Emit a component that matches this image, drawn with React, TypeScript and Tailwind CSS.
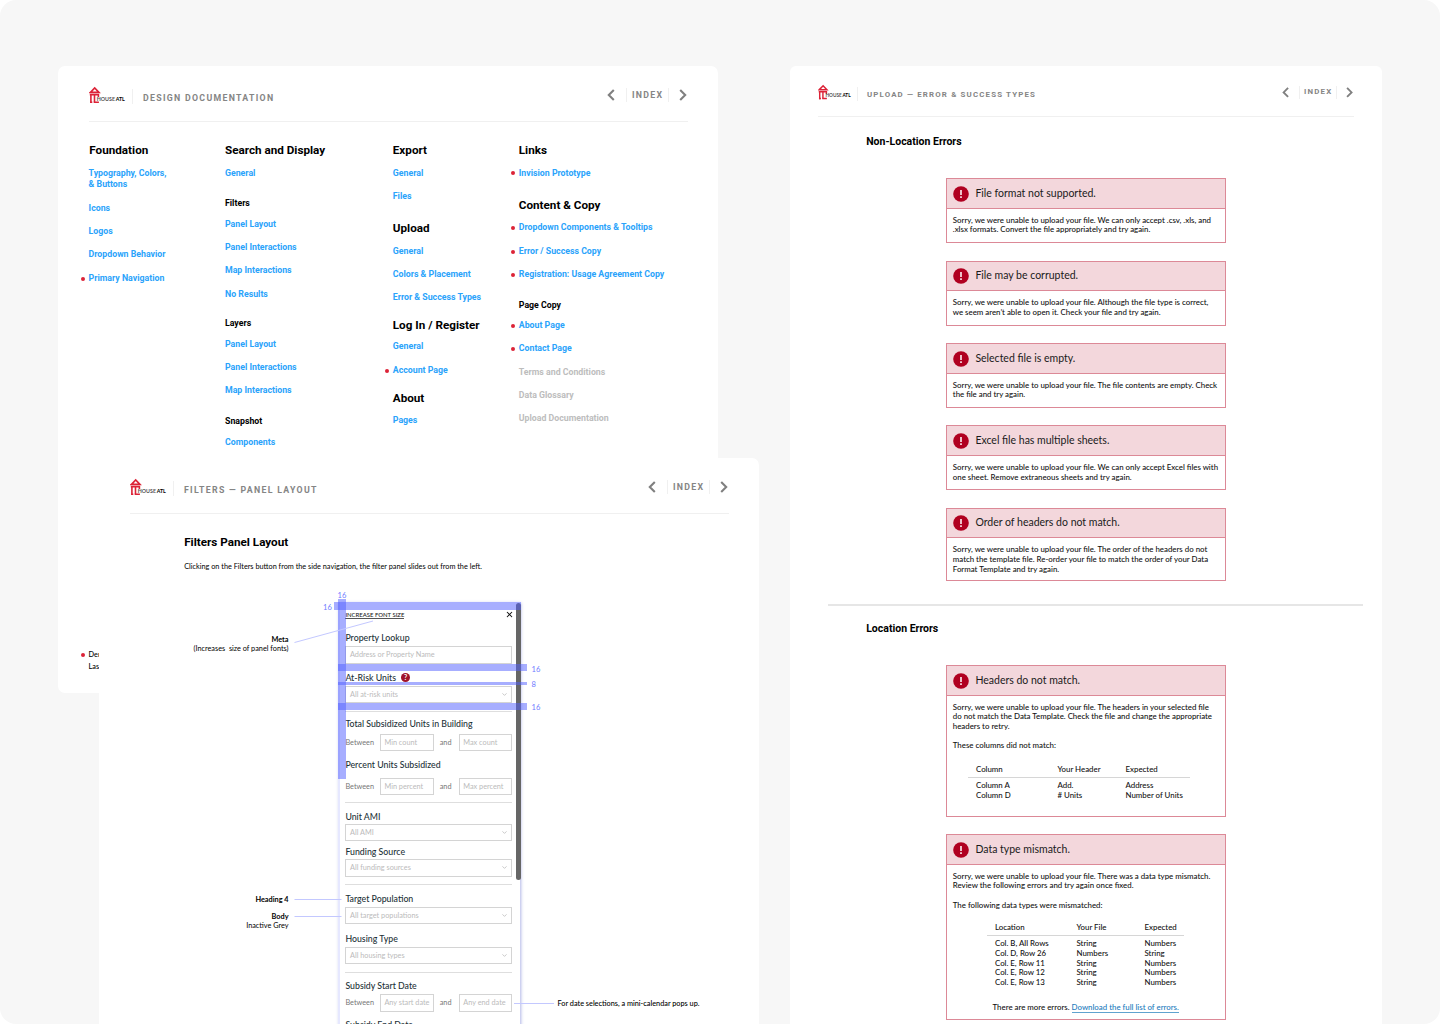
import React from 'react'
import clsx from 'clsx'
import { ChevronDown, X } from 'lucide-react'

type LinkItem = { label: React.ReactNode; dot?: boolean; muted?: boolean }
type Group = { title: string; sub?: boolean; className?: string; titleGap?: string; items: LinkItem[] }

const columns: { className: string; groups: Group[] }[] = [
  {
    className: 'w-[136.4px] [&_h2]:pl-[0.7px]',
    groups: [
      {
        title: 'Foundation',
        items: [
          { label: <>Typography, Colors,<br />&amp; Buttons</> },
          { label: 'Icons' },
          { label: 'Logos' },
          { label: 'Dropdown Behavior' },
          { label: 'Primary Navigation', dot: true },
        ],
      },
    ],
  },
  {
    className: 'w-[167.8px]',
    groups: [
      { title: 'Search and Display', items: [{ label: 'General' }] },
      {
        title: 'Filters',
        sub: true,
        className: 'mt-[17.55px]',
        items: [{ label: 'Panel Layout' }, { label: 'Panel Interactions' }, { label: 'Map Interactions' }, { label: 'No Results' }],
      },
      {
        title: 'Layers',
        sub: true,
        className: 'mt-[16.85px]',
        titleGap: 'mb-[9.45px]',
        items: [{ label: 'Panel Layout' }, { label: 'Panel Interactions' }, { label: 'Map Interactions' }],
      },
      { title: 'Snapshot', sub: true, className: 'mt-[17.75px]', items: [{ label: 'Components' }] },
    ],
  },
  {
    className: 'w-[126px]',
    groups: [
      { title: 'Export', items: [{ label: 'General' }, { label: 'Files' }] },
      {
        title: 'Upload',
        className: 'mt-[15.4px]',
        titleGap: 'mb-[7.5px]',
        items: [{ label: 'General' }, { label: 'Colors & Placement' }, { label: 'Error & Success Types' }],
      },
      {
        title: 'Log In / Register',
        className: 'mt-[11.25px]',
        titleGap: 'mb-[6.2px]',
        items: [{ label: 'General' }, { label: 'Account Page', dot: true }],
      },
      { title: 'About', className: 'mt-[11.1px]', items: [{ label: 'Pages' }] },
    ],
  },
  {
    className: 'w-[170px]',
    groups: [
      { title: 'Links', items: [{ label: 'Invision Prototype', dot: true }] },
      {
        title: 'Content & Copy',
        className: 'mt-[15.3px]',
        items: [
          { label: 'Dropdown Components & Tooltips', dot: true },
          { label: 'Error / Success Copy', dot: true },
          { label: 'Registration: Usage Agreement Copy', dot: true },
        ],
      },
      {
        title: 'Page Copy',
        sub: true,
        className: 'mt-[17.85px]',
        titleGap: 'mb-[9.25px]',
        items: [
          { label: 'About Page', dot: true },
          { label: 'Contact Page', dot: true },
          { label: 'Terms and Conditions', muted: true },
          { label: 'Data Glossary', muted: true },
          { label: 'Upload Documentation', muted: true },
        ],
      },
    ],
  },
]

const uploadErrors = [
  {
    title: 'File format not supported.',
    height: 'h-[65px]',
    lines: ['Sorry, we were unable to upload your file. We can only accept .csv, .xls, and', '.xlsx formats. Convert the file appropriately and try again.'],
  },
  {
    title: 'File may be corrupted.',
    height: 'h-[65px]',
    lines: ['Sorry, we were unable to upload your file. Although the file type is correct,', 'we seem aren’t able to open it. Check your file and try again.'],
  },
  {
    title: 'Selected file is empty.',
    height: 'h-[65px]',
    lines: ['Sorry, we were unable to upload your file. The file contents are empty. Check', 'the file and try again.'],
  },
  {
    title: 'Excel file has multiple sheets.',
    height: 'h-[65px]',
    lines: ['Sorry, we were unable to upload your file. We can only accept Excel files with', 'one sheet. Remove extraneous sheets and try again.'],
  },
  {
    title: 'Order of headers do not match.',
    height: 'h-[73px]',
    lines: [
      'Sorry, we were unable to upload your file. The order of the headers do not',
      'match the template file. Re-order your file to match the order of your Data',
      'Format Template and try again.',
    ],
  },
]

function Logo() {
  return (
    <div className="flex h-[18px] w-[36px] items-end">
      <svg width="12" height="18" viewBox="0 0 12 18" className="shrink-0" fill="none" stroke="#dc2337">
        <path d="M1.5 6.3 5.7 2l4.2 4.3z" strokeWidth="1.7" />
        <path d="M.8 8.6h9.4M1.9 8v8.9M5.5 8.6v7.6M9.4 8v3.2" strokeWidth="1.6" />
        <path d="M1.1 16.2h2.2M4.7 16.2h5.2" strokeWidth="1.6" />
      </svg>
      <span className="-ml-[3.8px] mb-[2px] whitespace-nowrap font-['Lato'] text-[5.3px] leading-[6px] text-[#555]">
        HOUSE<span className="ml-[0.7px] font-bold text-black">ATL</span>
      </span>
    </div>
  )
}

function Chevron({ left }: { left?: boolean }) {
  return (
    <svg width="8" height="12" viewBox="0 0 8 12" fill="none" stroke="#808080" strokeWidth="2.1">
      <path d={left ? 'M6.8 1 1.8 6l5 5' : 'M1.2 1l5 5-5 5'} />
    </svg>
  )
}

function BoardHeader({ title }: { title: string }) {
  return (
    <header className="mx-[30.5px] flex h-[56px] items-start justify-between border-b border-[#f0f0f0] font-['Roboto'] text-[8.77px] font-bold text-[#858585]">
      <div className="flex">
        <div className="mt-[20px]"><Logo /></div>
        <div className="ml-[7px] mt-[23px] h-[15px] w-px bg-[#f0f0f0]" />
        <h1 className="ml-[10.5px] mt-[26px] leading-[12px] tracking-[1.3px]">{title}</h1>
      </div>
      <nav className="mr-[0.6px] mt-[22px] flex h-[14px] items-center">
        <Chevron left />
        <div className="ml-[10.5px] h-[14px] w-px bg-[#f0f0f0]" />
        <span className="w-[41px] pl-[5px] leading-[12px] tracking-[1.3px]">INDEX</span>
        <div className="mr-[10px] h-[14px] w-px bg-[#f0f0f0]" />
        <Chevron />
      </nav>
    </header>
  )
}

function Dot() {
  return <span className="absolute -left-[8px] top-1/2 size-[4px] -translate-y-1/2 rounded-full bg-[#dc2337]" />
}

function LinkGroup({ group }: { group: Group }) {
  return (
    <section className={group.className}>
      <h2
        className={clsx(
          'whitespace-nowrap font-bold text-black',
          group.sub ? 'h-[12px] text-[8.77px] leading-[12px]' : 'h-[20px] text-[11.7px] leading-[20px]',
          group.titleGap ?? (group.sub ? 'mb-[9.75px]' : 'mb-[7.75px]')
        )}
      >
        {group.title}
      </h2>
      <ul className="flex flex-col gap-[11.65px]">
        {group.items.map((item, i) => (
          <li key={i} className={clsx('relative whitespace-nowrap font-bold', item.muted ? 'text-[#bdbdbd]' : 'text-[#2aa3fb]')}>
            {item.dot && <Dot />}
            {item.label}
          </li>
        ))}
      </ul>
    </section>
  )
}

function IndexBoard() {
  return (
    <article className="absolute left-[58px] top-[66px] flex h-[627px] w-[660px] flex-col rounded-[7px] bg-white">
      <BoardHeader title="DESIGN DOCUMENTATION" />
      <div className="ml-[30.6px] mt-[17.9px] flex font-['Roboto'] text-[8.77px] leading-[11.7px]">
        {columns.map((col, i) => (
          <div key={i} className={col.className}>
            {col.groups.map((g) => <LinkGroup key={g.title} group={g} />)}
          </div>
        ))}
      </div>
      <footer className="mb-[20.5px] ml-[30.6px] mt-auto w-[20px] font-['Lato'] text-[7.3px] font-medium leading-[11.7px]">
        <p className="relative"><Dot />Denotes</p>
        <p>Last</p>
      </footer>
    </article>
  )
}

function FieldTitle({ className, children }: { className: string; children: React.ReactNode }) {
  return (
    <h3 className={clsx('flex h-[10px] items-center whitespace-nowrap pt-[1.2px] text-[8.77px] font-medium leading-[10px] text-[#1d3238]', className)}>
      {children}
    </h3>
  )
}

function Field({ placeholder, className, select = true }: { placeholder: string; className: string; select?: boolean }) {
  return (
    <div className={clsx('flex h-[17.5px] items-center justify-between whitespace-nowrap border border-[#d4d4d4] pl-[3.6px] pr-[3px] text-[#bbb]', className)}>
      <span className="pt-[2.2px]">{placeholder}</span>
      {select && <ChevronDown size={7} strokeWidth={2.5} color="#b5b5b5" />}
    </div>
  )
}

function Range({ from, to, className }: { from: string; to: string; className: string }) {
  return (
    <div className={clsx('flex items-center text-[#777]', className)}>
      <span className="w-[34.5px] pt-[1.8px]">Between</span>
      <Field placeholder={from} select={false} className="w-[54px]" />
      <span className="w-[25px] pl-[6px] pt-[2.2px]">and</span>
      <Field placeholder={to} select={false} className="w-[53px]" />
    </div>
  )
}

function Rule({ className }: { className: string }) {
  return <div className={clsx('h-px bg-[#dedede]', className)} />
}

function FilterPanel() {
  return (
    <div className="relative ml-[239px] mt-[30px] w-[182px] font-['Lato'] text-[7.3px]">
      <div className="h-[440px] border-l-2 border-[#e6e8ff] bg-white pl-[5.4px] pr-[8.4px] pt-[7.5px] shadow-[1px_1px_3px_rgba(80,90,200,0.45)]">
        <div className="flex h-[10px] items-center justify-between pt-px">
          <span className="border-b border-[#555] text-[5.95px] font-medium leading-[7px] text-[#222]">INCREASE FONT SIZE</span>
          <X size={9} strokeWidth={2.8} color="#111" className="-mr-[2px]" />
        </div>
        <FieldTitle className="mt-[13px]">Property Lookup</FieldTitle>
        <Field placeholder="Address or Property Name" select={false} className="mt-[4px]" />
        <FieldTitle className="mt-[8.5px]">
          At-Risk Units
          <span className="ml-[5px] flex size-[9px] items-center justify-center rounded-full bg-[#a0122a] pb-px text-[7px] font-bold leading-[8px] text-white">?</span>
        </FieldTitle>
        <Field placeholder="All at-risk units" className="mt-[3.5px]" />
        <Rule className="mt-[7.5px]" />
        <FieldTitle className="mt-[6.5px]">Total Subsidized Units in Building</FieldTitle>
        <Range from="Min count" to="Max count" className="mt-[5.5px]" />
        <FieldTitle className="mt-[8.5px]">Percent Units Subsidized</FieldTitle>
        <Range from="Min percent" to="Max percent" className="mt-[8px]" />
        <Rule className="mt-[7px]" />
        <FieldTitle className="mt-[8px]">Unit AMI</FieldTitle>
        <Field placeholder="All AMI" className="mt-[2.5px]" />
        <FieldTitle className="mt-[5.5px]">Funding Source</FieldTitle>
        <Field placeholder="All funding sources" className="mt-[2.5px]" />
        <Rule className="mt-[7px]" />
        <FieldTitle className="mt-[8.5px]">Target Population</FieldTitle>
        <Field placeholder="All target populations" className="mt-[3.5px]" />
        <FieldTitle className="mt-[9px]">Housing Type</FieldTitle>
        <Field placeholder="All housing types" className="mt-[3.5px]" />
        <Rule className="mt-[7.5px]" />
        <FieldTitle className="mt-[8px]">Subsidy Start Date</FieldTitle>
        <Range from="Any start date" to="Any end date" className="mt-[3.5px]" />
        <FieldTitle className="mt-[8px]">Subsidy End Date</FieldTitle>
      </div>
      <div className="absolute left-[178px] top-[1px] h-[277px] w-[4.5px] rounded-full bg-[#666]" />

      {/* spacing guides */}
      <div className="absolute left-0 -top-[3px] h-[180px] w-[7.5px] bg-[#4f5dff]/50" />
      <div className="absolute -left-[4px] top-0 h-[8px] w-[187px] bg-[#4f5dff]/50" />
      <div className="absolute left-0 top-[62px] h-[7.7px] w-[189px] bg-[#4f5dff]/50" />
      <div className="absolute left-0 top-[80px] h-[3px] w-[189px] bg-[#4f5dff]/50" />
      <div className="absolute left-0 top-[101px] h-[7.7px] w-[189px] bg-[#4f5dff]/50" />
      <div className="text-[7.6px] leading-[10px] text-[#6f7bff]">
        <span className="absolute -left-[0.5px] -top-[12px]">16</span>
        <span className="absolute -left-[15px] top-[0.5px]">16</span>
        <span className="absolute left-[193.5px] top-[62px]">16</span>
        <span className="absolute left-[193.5px] top-[77px]">8</span>
        <span className="absolute left-[193.5px] top-[100.7px]">16</span>
      </div>

      {/* callouts */}
      <svg width="400" height="440" viewBox="-150 0 400 440" className="pointer-events-none absolute -left-[150px] top-0" stroke="#c3c8ff" strokeWidth="1">
        <path d="M-43.5 40.5 35 19M-43.5 297.5H3.5M-43.5 314.5H3.5M176 401.5H216" />
      </svg>
      <div className="leading-[9px] text-black">
        <p className="absolute right-[231.5px] top-[33px] whitespace-pre text-right"><b>Meta</b><br />(Increases  size of panel fonts)</p>
        <p className="absolute right-[231.5px] top-[293px] whitespace-nowrap"><b>Heading 4</b></p>
        <p className="absolute right-[231.5px] top-[310px] whitespace-nowrap text-right"><b>Body</b><br />Inactive Grey</p>
        <p className="absolute left-[219.5px] top-[397px] whitespace-nowrap font-medium">For date selections, a mini-calendar pops up.</p>
      </div>
    </div>
  )
}

function FiltersBoard() {
  return (
    <article className="absolute left-[99px] top-[458px] h-[600px] w-[660px] rounded-[7px] bg-white">
      <BoardHeader title="FILTERS — PANEL LAYOUT" />
      <h2 className="ml-[85.2px] mt-[18px] font-['Roboto'] text-[11.7px] font-bold leading-[20px] text-black">Filters Panel Layout</h2>
      <p className="ml-[85.2px] mt-[9.5px] font-['Lato'] text-[7.3px] leading-[10px] text-black">
        Clicking on the Filters button from the side navigation, the filter panel slides out from the left.
      </p>
      <FilterPanel />
    </article>
  )
}

function ErrorCard({ title, className, children }: { title: string; className: string; children: React.ReactNode }) {
  return (
    <section className={clsx('w-[280px] border border-[#dc8997] bg-white', className)}>
      <h3 className="flex h-[29.5px] items-center border-b border-[#dc8997] bg-[#f3d7dc] pl-[6px] pt-[0.6px] text-[10.5px] text-[#1a1a1a]">
        <svg width="16" height="16" viewBox="0 0 16 16" className="mr-[6.8px]">
          <circle cx="8" cy="8" r="7.8" fill="#b00020" />
          <path d="M7.1 4h1.8v4.9H7.1zM7.1 10.2h1.8v1.8H7.1z" fill="#f3d7dc" />
        </svg>
        {title}
      </h3>
      <div className="whitespace-nowrap pl-[6.2px] pt-[7px] text-[7.87px] font-medium leading-[9.65px] text-[#111]">{children}</div>
    </section>
  )
}

function ErrorTable({ head, rows, className }: { head: string[]; rows: string[][]; className: string }) {
  return (
    <table className={clsx('table-fixed text-left', className)}>
      <colgroup>
        <col className="w-[89.5px]" />
        <col className="w-[68px]" />
        <col />
      </colgroup>
      <thead>
        <tr className="h-[12.5px] border-b border-[#d6d6d6] align-top">
          {head.map((h) => <th key={h} className="p-0 font-medium first:pl-[8px]">{h}</th>)}
        </tr>
      </thead>
      <tbody>
        <tr className="h-[4px]" />
        {rows.map((row) => (
          <tr key={row[0]}>
            {row.map((cell, i) => <td key={i} className="p-0 first:pl-[8px]">{cell}</td>)}
          </tr>
        ))}
      </tbody>
    </table>
  )
}

function ErrorsBoard() {
  return (
    <article className="absolute left-[790px] top-[66px] h-[980px] w-[592px] rounded-[6px] bg-white font-['Lato']">
      <div className="px-[0.8px] pt-[0.6px] [zoom:0.897]">
        <BoardHeader title="UPLOAD — ERROR & SUCCESS TYPES" />
      </div>
      <h2 className="ml-[76.2px] mt-[15.3px] font-['Roboto'] text-[10.5px] font-bold leading-[20px] text-black">Non-Location Errors</h2>
      <div className="ml-[155.6px] mt-[26.2px] flex flex-col gap-[17.4px]">
        {uploadErrors.map((err) => (
          <ErrorCard key={err.title} title={err.title} className={err.height}>
            {err.lines.map((line) => <p key={line}>{line}</p>)}
          </ErrorCard>
        ))}
      </div>
      <div className="ml-[38px] mt-[23.4px] h-[1.5px] w-[535px] bg-[#e6e6e6]" />
      <h2 className="ml-[76.2px] mt-[13px] font-['Roboto'] text-[10.5px] font-bold leading-[20px] text-black">Location Errors</h2>
      <div className="ml-[155.6px] mt-[26.6px] flex flex-col gap-[17.5px]">
        <ErrorCard title="Headers do not match." className="h-[151.5px]">
          <p>Sorry, we were unable to upload your file. The headers in your selected file</p>
          <p>do not match the Data Template. Check the file and change the appropriate</p>
          <p>headers to retry.</p>
          <p className="mt-[9.65px]">These columns did not match:</p>
          <ErrorTable
            className="ml-[15.2px] mt-[13.7px] w-[222px]"
            head={['Column', 'Your Header', 'Expected']}
            rows={[['Column A', 'Add.', 'Address'], ['Column D', '# Units', 'Number of Units']]}
          />
        </ErrorCard>
        <ErrorCard title="Data type mismatch." className="h-[185.5px]">
          <p>Sorry, we were unable to upload your file. There was a data type mismatch.</p>
          <p>Review the following errors and try again once fixed.</p>
          <p className="mt-[9.65px]">The following data types were mismatched:</p>
          <ErrorTable
            className="ml-[34.2px] mt-[12.5px] w-[197px]"
            head={['Location', 'Your File', 'Expected']}
            rows={[
              ['Col. B, All Rows', 'String', 'Numbers'],
              ['Col. D, Row 26', 'Numbers', 'String'],
              ['Col. E, Row 11', 'String', 'Numbers'],
              ['Col. E, Row 12', 'String', 'Numbers'],
              ['Col. E, Row 13', 'String', 'Numbers'],
            ]}
          />
          <p className="mt-[15px] pr-[6px] text-center">
            There are more errors. <a className="border-b border-[#5fa3cf] text-[#1c7bbd]">Download the full list of errors.</a>
          </p>
        </ErrorCard>
      </div>
    </article>
  )
}

export default function App() {
  return (
    <div className="h-[1024px] w-[1440px] bg-white">
      <main className="relative h-full w-full overflow-hidden rounded-[16px] bg-[#f7f7f7]">
        <IndexBoard />
        <FiltersBoard />
        <ErrorsBoard />
      </main>
    </div>
  )
}
